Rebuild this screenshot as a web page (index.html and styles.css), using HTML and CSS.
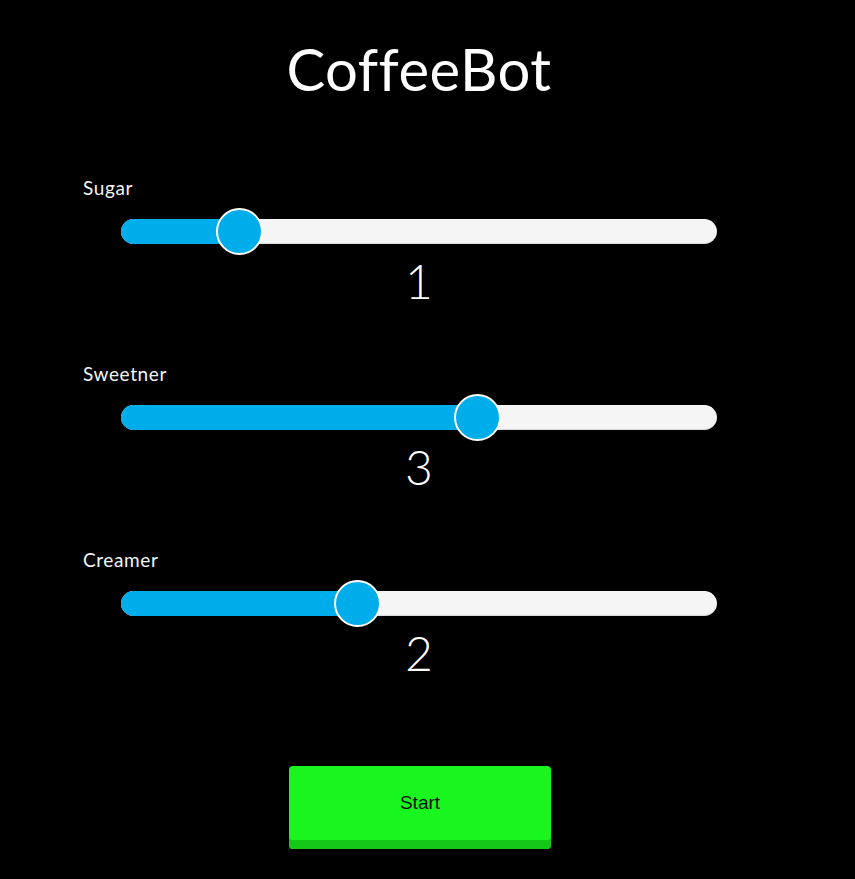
FILE: index.html
```html
<!DOCTYPE html>
<html>
<head>
<meta charset="utf-8">
<link rel="stylesheet" href="styles.css">
</head>
<body>
<main class="app">
  <h1 class="title">CoffeeBot</h1>
  <section class="control">
    <label class="label">Sugar</label>
    <div class="slider">
      <div class="fill" style="width: 119px"></div>
      <div class="thumb" style="left: 119px"></div>
    </div>
    <div class="value">1</div>
  </section>
  <section class="control">
    <label class="label">Sweetner</label>
    <div class="slider">
      <div class="fill" style="width: 357px"></div>
      <div class="thumb" style="left: 357px"></div>
    </div>
    <div class="value">3</div>
  </section>
  <section class="control">
    <label class="label">Creamer</label>
    <div class="slider">
      <div class="fill" style="width: 237px"></div>
      <div class="thumb" style="left: 237px"></div>
    </div>
    <div class="value">2</div>
  </section>
  <div class="actions">
    <button class="start">Start</button>
  </div>
</main>
</body>
</html>
```

FILE: styles.css
```css
html, body {
  margin: 0;
  padding: 0;
  background: #000;
  color: #fff;
}
body {
  font-family: Lato, "Open Sans", sans-serif;
  width: 855px;
  height: 879px;
  overflow: hidden;
}
.app {
  display: flex;
  flex-direction: column;
  width: 838px;
  padding-top: 34px;
}
.title {
  margin: 0;
  text-align: center;
  font-weight: 400;
  font-size: 58px;
  line-height: 70px;
  letter-spacing: 0.5px;
}
.control {
  display: flex;
  flex-direction: column;
  padding-left: 83px;
  margin-top: 73px;
}
.control > * {
  flex-shrink: 0;
}
.control + .control {
  margin-top: 57px;
}
.label {
  font-size: 19px;
  line-height: 22px;
  height: 22px;
  letter-spacing: 0.6px;
  font-weight: 400;
  color: #f4f4f4;
}
.slider {
  position: relative;
  margin-left: 38px;
  margin-top: 20px;
  width: 596px;
  height: 25px;
  border-radius: 13px;
  background: #f5f5f5;
  box-shadow: inset 0 -1px 1px rgba(0,0,0,0.12);
}
.fill {
  height: 100%;
  background: #00adeb;
  border-radius: 13px 0 0 13px;
}
.thumb {
  position: absolute;
  top: 50%;
  width: 43px;
  height: 43px;
  margin-left: -24px;
  margin-top: -24px;
  border: 2.5px solid #fff;
  border-radius: 50%;
  background: #00adeb;
}
.value {
  margin-top: 12px;
  margin-left: -83px;
  text-align: center;
  font-size: 48px;
  line-height: 50px;
  font-weight: 300;
}
.actions {
  display: flex;
  justify-content: center;
  margin-top: 88px;
}
.start {
  width: 262px;
  height: 83px;
  margin-left: 2px;
  border: none;
  border-radius: 4px;
  background: #19f51f;
  box-shadow: inset 0 -9px 0 #15c818;
  font-family: "Liberation Sans", Arial, sans-serif;
  font-size: 19px;
  color: #111;
  padding: 0 0 9px;
}
```
